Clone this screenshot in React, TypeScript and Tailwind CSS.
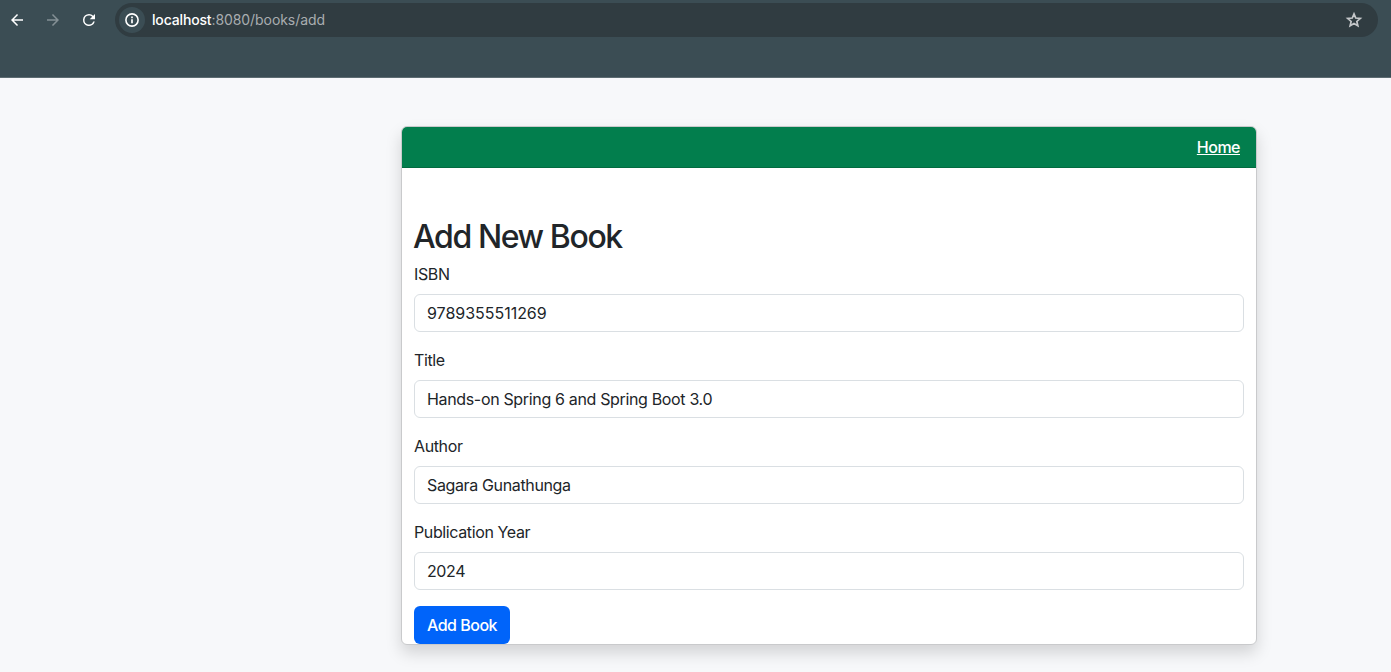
function Icon({ d, className }: { d: string; className: string }) {
  return (
    <svg viewBox="0 0 24 24" className={className} fill="currentColor">
      <path d={d} />
    </svg>
  );
}

function BrowserBar() {
  return (
    <header className="flex h-[78px] items-start border-b border-[#5d6c72] bg-[#3b4d54] pl-2">
      <div className="flex h-10 items-center text-white">
        <Icon className="size-[18px]" d="M20 11H7.83l5.59-5.59L12 4l-8 8 8 8 1.41-1.41L7.83 13H20v-2z" />
        <Icon className="ml-[18px] size-[18px] text-[#849095]" d="M12 4l-1.41 1.41L16.17 11H4v2h12.17l-5.58 5.59L12 20l8-8z" />
        <Icon className="ml-[18px] size-[18px]" d="M17.65 6.35A7.958 7.958 0 0 0 12 4a8 8 0 1 0 7.73 10h-2.08A6 6 0 1 1 12 6c1.66 0 3.14.69 4.22 1.78L13 11h7V4l-2.35 2.35z" />
      </div>
      <div className="mt-[3px] ml-[17px] flex h-[34px] w-[1263px] items-center rounded-full bg-[#303c41] pl-1">
        <span className="flex size-[26px] items-center justify-center rounded-full bg-[#3b4d54] text-white">
          <svg viewBox="0 0 16 16" className="size-4" fill="none" stroke="currentColor">
            <circle cx="8" cy="8" r="6.1" strokeWidth="1.6" />
            <path d="M8 7.2v4M8 4.6v1.6" strokeWidth="1.7" />
          </svg>
        </span>
        <span className="ml-[7px] text-sm text-[#a9adb0]">
          <span className="font-medium tracking-[-0.16px] text-white">localhost</span>
          <span className="tracking-[-0.07px]">:8080/books/add</span>
        </span>
        <svg viewBox="0 0 18 18" className="mr-[15px] ml-auto size-[18px] text-[#c4c7c9]" fill="none" stroke="currentColor" strokeWidth="1.7">
          <path d="M9 2.9l1.75 4.15 4.55.4-3.45 3 1.02 4.4L9 12.5l-3.87 2.35 1.02-4.4-3.45-3 4.55-.4z" />
        </svg>
      </div>
    </header>
  );
}

function Field({ label, value, valueClass }: { label: string; value: string; valueClass: string }) {
  return (
    <div className="mb-4">
      <label className="mb-2 block h-6 tracking-[-0.38px]">{label}</label>
      <div className="flex h-[38px] items-center rounded-md border border-[#dadfe3] px-3">
        <span className={valueClass}>{value}</span>
      </div>
    </div>
  );
}

export default function App() {
  return (
    <div className="flex h-[672px] flex-col overflow-hidden bg-[#f7f8fa] font-['Inter',sans-serif] text-base text-[#212529]">
      <BrowserBar />
      <main className="mt-12 ml-[401px] h-[519px] w-[856px] rounded-md border border-[#c9cacc] bg-white shadow-[0_8px_16px_rgba(0,0,0,0.15)]">
        <div className="flex h-[41px] items-center justify-end rounded-t-[5px] border-b border-[#026b40] bg-[#027e4d] px-4">
          <a className="font-[450] tracking-[-0.5px] text-white underline">Home</a>
        </div>
        <div className="px-3 pt-[50px]">
          <h1 className="mb-[6px] -ml-px flex h-[38px] items-center text-[32px] font-medium tracking-[-1.4px]">Add New Book</h1>
          <Field label="ISBN" value="9789355511269" valueClass="tracking-[-0.02px]" />
          <Field label="Title" value="Hands-on Spring 6 and Spring Boot 3.0" valueClass="tracking-[-0.34px]" />
          <Field label="Author" value="Sagara Gunathunga" valueClass="tracking-[-0.36px]" />
          <Field label="Publication Year" value="2024" valueClass="tracking-[-0.4px]" />
          <button className="flex h-[38px] w-24 items-center justify-center rounded-md bg-[#0064fa] font-[450] tracking-[-0.5px] text-white">Add Book</button>
        </div>
      </main>
    </div>
  );
}
